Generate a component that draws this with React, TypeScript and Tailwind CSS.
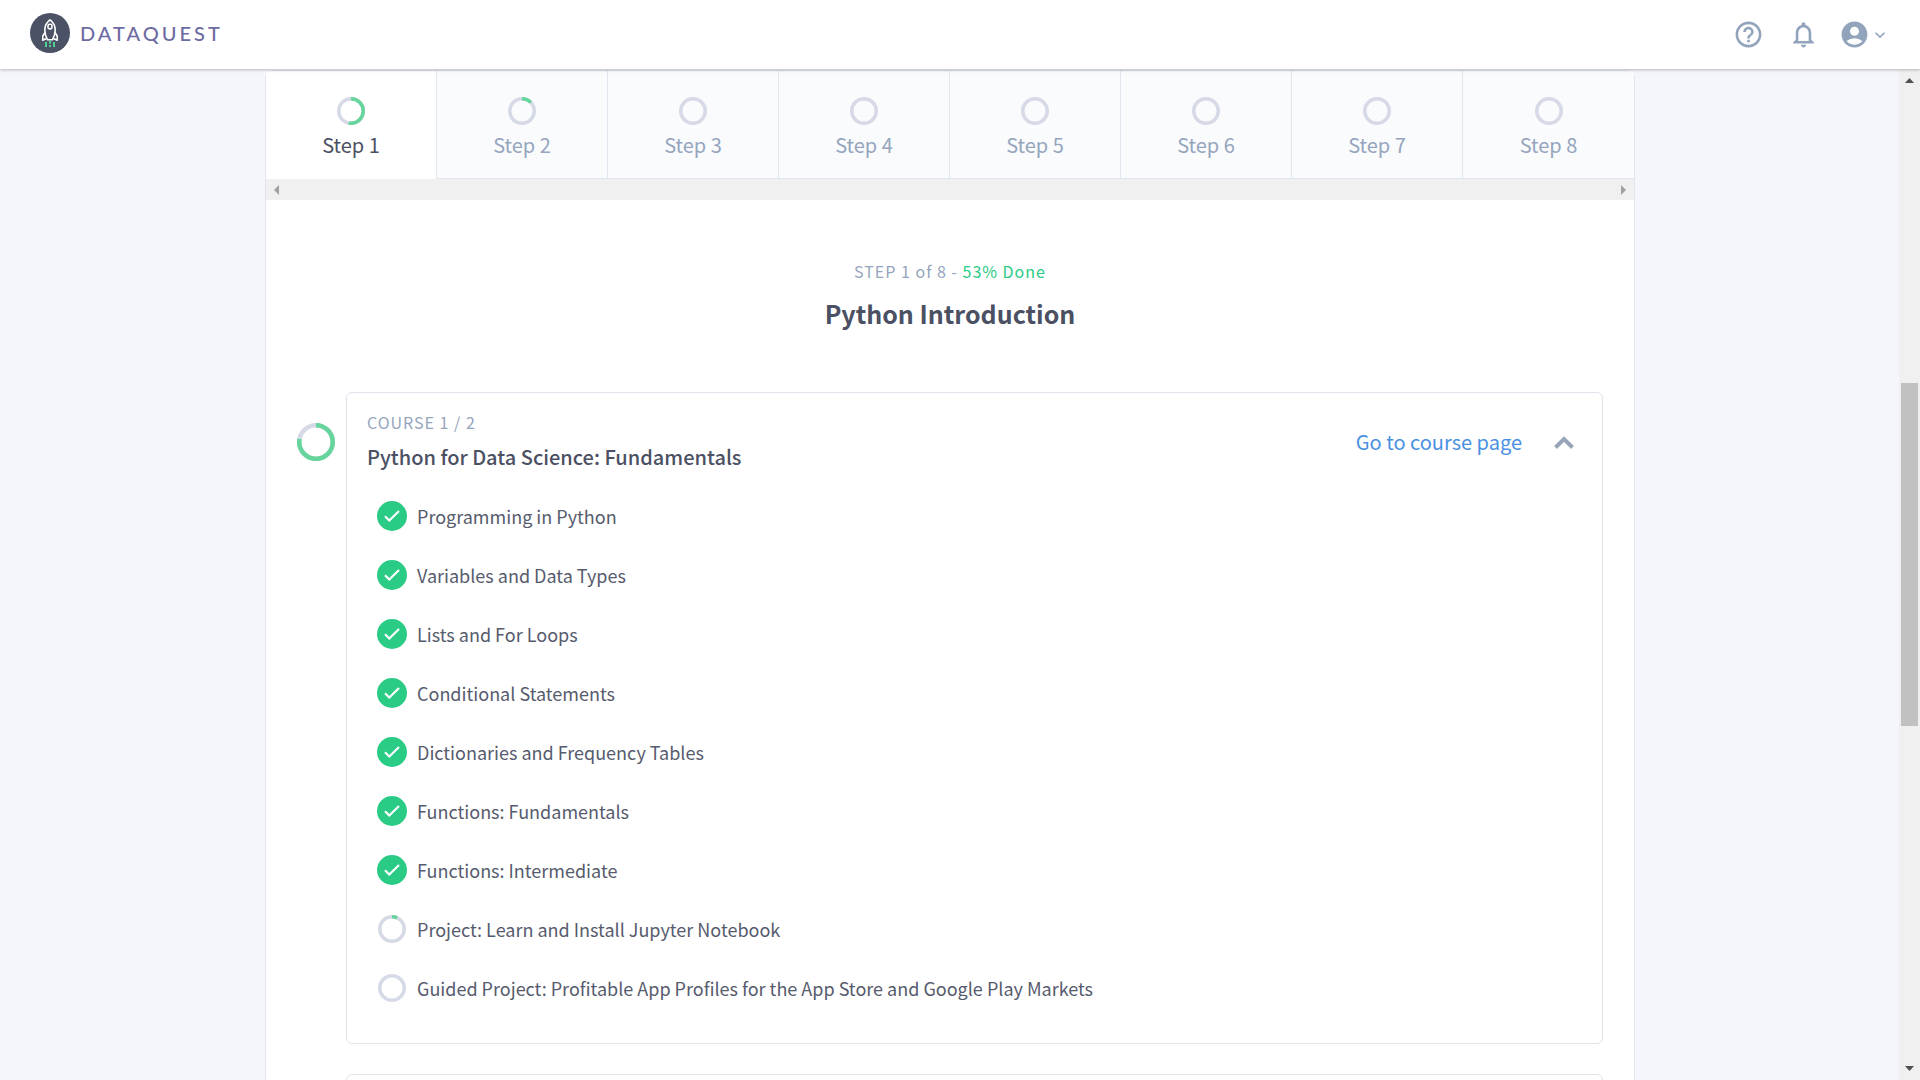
import React from "react";
import { MdHelpOutline, MdNotificationsNone, MdAccountCircle, MdKeyboardArrowDown } from "react-icons/md";

const steps = [53, 13, 0, 0, 0, 0, 0, 0];

const lessons = [
  { title: "Programming in Python", progress: 100 },
  { title: "Variables and Data Types", progress: 100 },
  { title: "Lists and For Loops", progress: 100 },
  { title: "Conditional Statements", progress: 100 },
  { title: "Dictionaries and Frequency Tables", progress: 100 },
  { title: "Functions: Fundamentals", progress: 100 },
  { title: "Functions: Intermediate", progress: 100 },
  { title: "Project: Learn and Install Jupyter Notebook", progress: 7 },
  { title: "Guided Project: Profitable App Profiles for the App Store and Google Play Markets", progress: 0 },
];

function Ring({ progress, size }: { progress: number; size: number }) {
  const stroke = size > 30 ? 4.5 : 3.5;
  const r = (size - stroke) / 2;
  const c = size / 2;
  return (
    <svg width={size} height={size} className="shrink-0" aria-hidden="true">
      <circle cx={c} cy={c} r={r} fill="none" stroke="#d5dae6" strokeWidth={stroke} />
      {progress > 0 && (
        <circle
          cx={c}
          cy={c}
          r={r}
          fill="none"
          stroke="#65d59b"
          strokeWidth={stroke}
          pathLength={100}
          strokeDasharray={`${progress} 100`}
          transform={`rotate(-90 ${c} ${c})`}
        />
      )}
    </svg>
  );
}

function Logo() {
  return (
    <a href="#home" className="flex items-center gap-[10px]" aria-label="Dataquest home">
      <svg width="40" height="40" viewBox="0 0 40 40" fill="none" aria-hidden="true">
        <circle cx="20" cy="20" r="20" fill="#4b5265" />
        <g stroke="#fff" strokeWidth="1.6" strokeLinejoin="round">
          <path d="M20 6.8c-3.600 2.6-5.200 6-5.200 10.200c0 3.500 1 6.800 2.800 9.800h4.800c1.800-3 2.800-6.300 2.800-9.800c0-4.200-1.600-7.600-5.200-10.200z" />
          <rect x="18" y="11.300" width="4" height="4.600" rx="1.600" />
          <path d="M15 19.500l-2.200 3.500v4.200l3.800-1.700M25 19.500l2.200 3.500v4.200l-3.800-1.700" />
        </g>
        <path d="M16 29v5M20 27.500v3.300M20 32v2M24 29v5" stroke="#4fd090" strokeWidth="2" />
      </svg>
      <span className="font-['Lato'] text-[20px] leading-6 font-medium tracking-[3px] text-[#6d6ba3]">DATAQUEST</span>
    </a>
  );
}

function Header() {
  return (
    <header className="relative z-10 flex h-[69px] shrink-0 items-center justify-between bg-white pr-[30px] pb-1 pl-[30px] shadow-[0_1px_3px_rgba(0,0,0,0.25)]">
      <Logo />
      <nav className="flex items-center pt-1 text-[#92a4bb]">
        <button aria-label="Help" className="mr-6"><MdHelpOutline size={31} /></button>
        <button aria-label="Notifications" className="mr-5"><MdNotificationsNone size={31} /></button>
        <button aria-label="Account" className="flex items-center">
          <MdAccountCircle size={31} />
          <MdKeyboardArrowDown size={20} />
        </button>
      </nav>
    </header>
  );
}

function StepTabs() {
  return (
    <div>
      <div role="tablist" className="grid h-[108px] grid-cols-8">
        {steps.map((progress, i) => (
          <button
            key={i}
            role="tab"
            aria-selected={i === 0}
            className={
              i === 0
                ? "flex flex-col items-center rounded-tl border-r border-[#e1e5ed] bg-white pt-[26px] text-[#4b5063]"
                : "flex flex-col items-center border-r border-b border-[#e1e5ed] bg-[#fafbfd] pt-[26px] text-[#95a5bd] last:rounded-tr last:border-r-0"
            }
          >
            <Ring progress={progress} size={28} />
            <span className="mt-1 text-[20px] leading-8">Step {i + 1}</span>
          </button>
        ))}
      </div>
      <div className="flex h-[21px] items-center justify-between bg-[#f0f0f0] px-2 text-[#a0a0a0]" aria-hidden="true">
        <svg width="5" height="10"><path d="M5 0v10L0 5z" fill="currentColor" /></svg>
        <svg width="5" height="10"><path d="M0 0v10l5-5z" fill="currentColor" /></svg>
      </div>
    </div>
  );
}

function LessonRow({ title, progress }: { title: string; progress: number }) {
  return (
    <li className="flex h-[59px] items-center">
      <span className="mr-[10px] flex size-[30px] shrink-0 items-center justify-center">
        {progress === 100 ? (
          <span className="flex size-[30px] items-center justify-center rounded-full bg-[#29cb85] text-white">
            <svg width="16" height="12" viewBox="0 0 16 12" fill="none" stroke="currentColor" strokeWidth="2.2" aria-label="Completed">
              <path d="M1 6.200l4.300 4.300L15 1" />
            </svg>
          </span>
        ) : (
          <Ring progress={progress} size={28} />
        )}
      </span>
      <a href="#lesson" className="text-[18px] leading-7 text-[#565b6d]">{title}</a>
    </li>
  );
}

function CourseCard() {
  return (
    <section className="flex">
      <div className="w-[49px] shrink-0 pt-[31px]">
        <Ring progress={78} size={38} />
      </div>
      <div className="flex-1 rounded-md border border-[#e2e4ed] px-5 pt-[15px] pb-[26px]">
        <div className="flex items-center justify-between">
          <div>
            <p className="text-[16px] leading-7 tracking-[1px] text-[#95a5bd]">COURSE 1 / 2</p>
            <h2 className="mt-1 text-[20px] leading-[34px] font-medium text-[#4b5063]">Python for Data Science: Fundamentals</h2>
          </div>
          <div className="flex items-center gap-8 pt-[2px] pr-2">
            <a href="#course" className="text-[20px] leading-8 text-[#4a90e2]">Go to course page</a>
            <button aria-label="Collapse course">
              <svg width="20" height="14" viewBox="0 0 20 14" fill="none" stroke="#98a5b9" strokeWidth="4">
                <path d="M1.500 12.500L10 4l8.500 8.500" />
              </svg>
            </button>
          </div>
        </div>
        <ul className="mt-3 pl-[10px]">
          {lessons.map((l) => (
            <LessonRow key={l.title} {...l} />
          ))}
        </ul>
      </div>
    </section>
  );
}

export default function App() {
  return (
    <div className="flex h-screen flex-col overflow-hidden bg-[#f4f6fb] font-['Noto_Sans_CJK_SC',sans-serif]">
      <Header />
      <div className="flex min-h-0 flex-1">
        <main className="min-w-0 flex-1 overflow-hidden pt-px pr-[264px] pl-[265px]">
          <div className="min-h-full rounded-t-lg border border-[#e1e5ed] bg-white">
            <StepTabs />
            <div className="px-[31px]">
              <div className="pt-[57px] pb-[59px] text-center">
                <p className="text-[16px] leading-7 tracking-[1px] text-[#95a5bd]">
                  STEP 1 of 8 - <span className="text-[#29cb85]">53% Done</span>
                </p>
                <h1 className="mt-2 text-[25px] leading-10 font-bold text-[#4b5063]">Python Introduction</h1>
              </div>
              <CourseCard />
              <section className="mt-[30px] ml-[49px] h-[120px] rounded-md border border-[#e2e4ed]" aria-label="Course 2 / 2" />
            </div>
          </div>
        </main>
        <div className="flex w-[21px] shrink-0 flex-col items-center bg-[#f0f0f0] py-[9px] text-[#505050]" aria-hidden="true">
          <svg width="9" height="5"><path d="M0 5h9L4.500 0z" fill="currentColor" /></svg>
          <div className="h-[300px] shrink-0" />
          <div className="h-[343px] w-[17px] shrink-0 bg-[#c1c1c1]" />
          <svg className="mt-auto" width="9" height="5"><path d="M0 0h9L4.500 5z" fill="currentColor" /></svg>
        </div>
      </div>
    </div>
  );
}
